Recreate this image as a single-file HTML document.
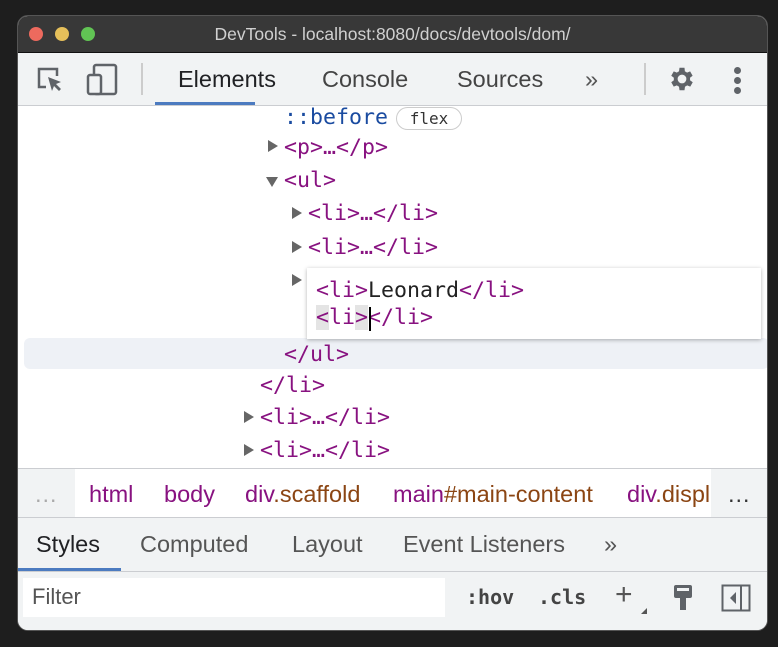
<!DOCTYPE html>
<html><head><meta charset="utf-8"><style>
*{box-sizing:border-box;margin:0;padding:0}
body{width:778px;height:647px;background:#1e1e1e;position:relative;overflow:hidden;font-family:"Liberation Sans",Arial,sans-serif}
.win{position:absolute;left:17px;top:15px;width:751px;height:616px;border-radius:11px;overflow:hidden;background:#fff;border:1px solid #555}
.title{position:absolute;left:0;top:0;width:100%;height:37px;background:#383838;color:#d0d0d0;font-size:17.5px;text-align:center;line-height:36px;border-bottom:1px solid #111}
.dot{position:absolute;top:11px;width:14px;height:14px;border-radius:50%}
.tb{position:absolute;left:0;top:37px;width:100%;height:53px;background:#f1f3f4;border-bottom:1px solid #cbcdd1}
.tab{position:absolute;top:0;height:52px;line-height:52px;font-size:23.5px;color:#444}
.dom{position:absolute;left:0;top:91px;width:100%;height:361px;background:#fff;font-family:"DejaVu Sans Mono",monospace;font-size:21.6px}
.ln{position:absolute;white-space:pre;color:#881280;line-height:30px}
.tri{position:absolute;width:0;height:0}
.bc{position:absolute;left:0;top:452px;width:100%;height:50px;background:#f1f3f4;border-top:1px solid #cbcdd1;border-bottom:1px solid #cbcdd1}
.bc>span{position:absolute;top:12px;font-size:23.5px;white-space:nowrap}
.st{position:absolute;left:0;top:502px;width:100%;height:54px;background:#f1f3f4;border-bottom:1px solid #cbcdd1}
.st span{position:absolute;top:13px;font-size:23.5px;color:#555}
.fl{position:absolute;left:0;top:556px;width:100%;height:60px;background:#f1f3f4}
</style></head><body>
<div class="win">
<div class="title">DevTools - localhost:8080/docs/devtools/dom/
<div class="dot" style="left:11px;background:#ed6a5e"></div>
<div class="dot" style="left:37px;background:#e5bf5a"></div>
<div class="dot" style="left:63px;background:#61c454"></div>
</div>
<div class="tb">
<svg style="position:absolute;left:17px;top:12px" width="30" height="30" viewBox="0 0 30 30"><path d="M11 22H4V4h18v7" fill="none" stroke="#5f6368" stroke-width="2.5"/><path d="M13 12l13 5-5 2 5 5-2 2-5-5-2 5z" fill="#5f6368"/></svg>
<svg style="position:absolute;left:68px;top:10px" width="34" height="34" viewBox="0 0 34 34"><rect x="8" y="2" width="22" height="29" rx="2" fill="none" stroke="#5f6368" stroke-width="2.5"/><rect x="2" y="12" width="13" height="19" rx="2" fill="#f1f3f4" stroke="#5f6368" stroke-width="2.5"/></svg>
<div style="position:absolute;left:123px;top:10px;width:2px;height:32px;background:#ccc"></div>
<div class="tab" style="left:160px;color:#202124">Elements</div>
<div style="position:absolute;left:137px;top:49px;width:100px;height:3px;background:#4c7bc0"></div>
<div class="tab" style="left:304px">Console</div>
<div class="tab" style="left:439px">Sources</div>
<div class="tab" style="left:567px;color:#555">»</div>
<div style="position:absolute;left:626px;top:10px;width:2px;height:32px;background:#ccc"></div>
<svg style="position:absolute;left:649px;top:11px" width="30" height="30" viewBox="0 0 24 24"><path fill="#5f6368" d="M19.4 13a7.5 7.5 0 000-2l2.1-1.6-2-3.5-2.5 1a7 7 0 00-1.7-1L15 3h-4l-.4 2.9a7 7 0 00-1.7 1l-2.5-1-2 3.5L6.5 11a7.5 7.5 0 000 2l-2.1 1.6 2 3.5 2.5-1a7 7 0 001.7 1L11 21h4l.4-2.9a7 7 0 001.7-1l2.5 1 2-3.5zM13 15.5a3.5 3.5 0 110-7 3.5 3.5 0 010 7z" transform="translate(-1 0)"/></svg>
<div style="position:absolute;left:716px;top:14px;width:7px;height:7px;border-radius:50%;background:#5f6368;box-shadow:0 10px 0 #5f6368,0 20px 0 #5f6368"></div>
</div>
<div class="dom">
<div class="ln" style="left:266px;top:-4px;color:#1a4ba0">::before</div>
<div style="position:absolute;left:378px;top:0;width:66px;height:23px;border:1px solid #ccc;border-radius:12px;font-size:16px;color:#333;text-align:center;line-height:21px">flex</div>
<div class="tri" style="left:250px;top:33px;border-left:10px solid #666;border-top:6px solid transparent;border-bottom:6px solid transparent"></div>
<div class="ln" style="left:266px;top:26px">&lt;p&gt;…&lt;/p&gt;</div>
<div class="tri" style="left:248px;top:70px;border-top:10px solid #666;border-left:6px solid transparent;border-right:6px solid transparent"></div>
<div class="ln" style="left:266px;top:59px">&lt;ul&gt;</div>
<div class="tri" style="left:274px;top:100px;border-left:10px solid #666;border-top:6px solid transparent;border-bottom:6px solid transparent"></div>
<div class="ln" style="left:290px;top:92px">&lt;li&gt;…&lt;/li&gt;</div>
<div class="tri" style="left:274px;top:134px;border-left:10px solid #666;border-top:6px solid transparent;border-bottom:6px solid transparent"></div>
<div class="ln" style="left:290px;top:126px">&lt;li&gt;…&lt;/li&gt;</div>
<div class="tri" style="left:274px;top:167px;border-left:10px solid #666;border-top:6px solid transparent;border-bottom:6px solid transparent"></div>
<div style="position:absolute;left:6px;top:231px;width:745px;height:31px;background:#eef1f6;border-radius:6px"></div>
<div style="position:absolute;left:289px;top:161px;width:454px;height:71px;background:#fff;box-shadow:0 1px 4px rgba(0,0,0,.3)"></div>
<div class="ln" style="left:298px;top:169px">&lt;li&gt;<span style="color:#222">Leonard</span>&lt;/li&gt;</div>
<div class="ln" style="left:298px;top:196px"><span style="background:#e4e4e4">&lt;</span>li<span style="background:#e4e4e4">&gt;</span>&lt;/li&gt;</div>
<div style="position:absolute;left:351px;top:200px;width:2px;height:24px;background:#000"></div>
<div class="ln" style="left:266px;top:233px">&lt;/ul&gt;</div>
<div class="ln" style="left:242px;top:264px">&lt;/li&gt;</div>
<div class="tri" style="left:226px;top:304px;border-left:10px solid #666;border-top:6px solid transparent;border-bottom:6px solid transparent"></div>
<div class="ln" style="left:242px;top:296px">&lt;li&gt;…&lt;/li&gt;</div>
<div class="tri" style="left:226px;top:337px;border-left:10px solid #666;border-top:6px solid transparent;border-bottom:6px solid transparent"></div>
<div class="ln" style="left:242px;top:329px">&lt;li&gt;…&lt;/li&gt;</div>
</div>
<div class="bc">
<div style="position:absolute;left:57px;top:0;width:636px;height:48px;background:#fff"></div>
<span style="left:16px;color:#aaa">…</span>
<span style="left:71px;color:#881280">html</span>
<span style="left:146px;color:#881280">body</span>
<span style="left:227px;color:#881280">div<span style="color:#8b4513">.scaffold</span></span>
<span style="left:375px;color:#881280">main<span style="color:#8b4513">#main-content</span></span>
<span style="left:609px;color:#881280;width:84px;overflow:hidden">div<span style="color:#8b4513">.displ</span></span>
<span style="left:709px;color:#333">…</span>
</div>
<div class="st">
<span style="left:18px;color:#202124">Styles</span>
<span style="left:122px">Computed</span>
<span style="left:274px">Layout</span>
<span style="left:385px">Event Listeners</span>
<span style="left:586px">»</span>
<div style="position:absolute;left:0;top:50px;width:103px;height:3px;background:#4c7bc0"></div>
</div>
<div class="fl">
<div style="position:absolute;left:5px;top:6px;width:422px;height:39px;background:#fff"></div>
<span style="position:absolute;left:14px;top:12px;font-size:22px;color:#555">Filter</span>
<span style="position:absolute;left:448px;top:13px;font-size:20px;color:#444;font-family:'DejaVu Sans Mono',monospace;font-weight:bold">:hov</span>
<span style="position:absolute;left:520px;top:13px;font-size:20px;color:#444;font-family:'DejaVu Sans Mono',monospace;font-weight:bold">.cls</span>
<span style="position:absolute;left:597px;top:6px;font-size:30px;color:#555">+</span>
<div style="position:absolute;left:623px;top:36px;border-bottom:6px solid #555;border-left:6px solid transparent"></div>
<svg style="position:absolute;left:654px;top:12px" width="22" height="28" viewBox="0 0 22 28"><rect x="2" y="1" width="18" height="13" rx="2" fill="#5f6368"/><rect x="5" y="4" width="12" height="3" fill="#f1f3f4"/><rect x="8" y="14" width="6" height="12" fill="#5f6368"/></svg>
<svg style="position:absolute;left:703px;top:12px" width="30" height="28" viewBox="0 0 30 28"><rect x="1.5" y="1.5" width="27" height="25" fill="none" stroke="#5f6368" stroke-width="2"/><line x1="20" y1="2" x2="20" y2="26" stroke="#5f6368" stroke-width="2"/><path d="M15 8v12l-6-6z" fill="#5f6368"/></svg>
</div>
</div>
</body></html>
